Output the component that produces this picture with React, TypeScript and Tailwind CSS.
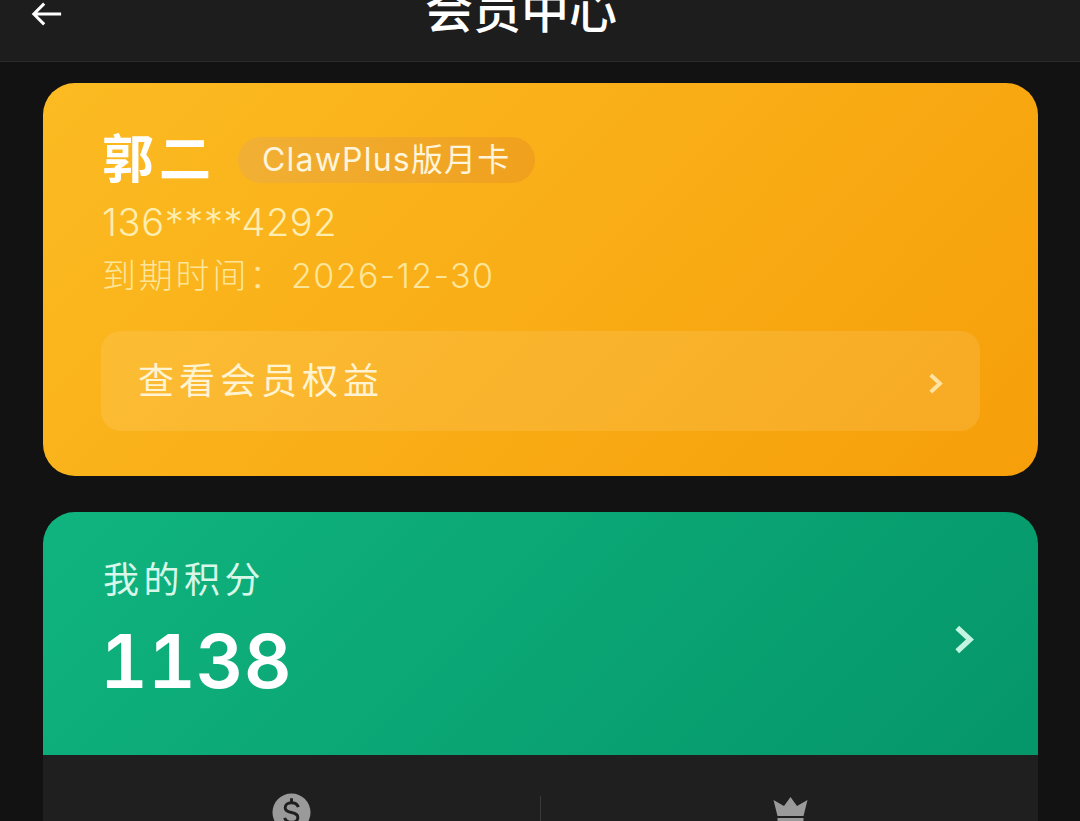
const font = "[font-family:Inter,'Noto_Sans_CJK_SC',sans-serif]"

function Chevron({ className }: { className: string }) {
  return (
    <svg viewBox="0 0 24 32" className={className} fill="none" stroke="currentColor" strokeWidth="6">
      <path d="M4 3 L18 16 L4 29" />
    </svg>
  )
}

export default function App() {
  return (
    <div className={`flex h-[821px] flex-col overflow-hidden bg-[#121212] ${font}`}>
      <header className="relative h-[62px] shrink-0 border-b border-[#2a2a2a] bg-[#1d1d1d]">
        <svg viewBox="0 0 34 28" className="absolute left-[31px] top-0 h-[28px] w-[32px] text-white" fill="none" stroke="currentColor" strokeWidth="3.2">
          <path d="M32 14 H3 M14 3 L3 14 L14 25" />
        </svg>
        <h1 className="absolute inset-x-0 top-[-21px] pr-[38px] text-center text-[48px] leading-[64px] font-medium text-white">
          会员中心
        </h1>
      </header>

      <main className="mt-[21px] mr-[42px] ml-[43px] flex flex-col">
        <section className="h-[393px] rounded-[32px] bg-[linear-gradient(135deg,#fcbb22,#f69f0a)] px-[58px] pt-[50px]">
          <div className="flex h-[54px] items-center">
            <span className="ml-px text-[52px] leading-[54px] font-semibold tracking-[5px] text-white">郭二</span>
            <span className="ml-[22px] flex h-[46px] items-center rounded-full bg-gradient-to-r from-[#f1b034] to-[#f0a01c] px-6 text-[32px] tracking-[1.2px] text-[#fff4dc]">
              ClawPlus版月卡
            </span>
          </div>
          <p className="mt-[13px] ml-[1px] text-[38px] leading-[44px] font-light tracking-[0.6px] text-[#ffeeb0]">136****4292</p>
          <p className="mt-[10px] ml-[1px] text-[34px] leading-[44px] font-light text-[#fde69a]">
            <span className="tracking-[2.8px]">到期时间：</span>
            <span className="ml-[5px] tracking-[1.4px]">2026-12-30</span>
          </p>
          <div className="mt-[33px] flex h-[100px] items-center justify-between rounded-[20px] bg-white/10 pr-[36px] pl-[37px]">
            <span className="text-[36px] tracking-[5px] text-[#fff3d2]">查看会员权益</span>
            <Chevron className="mt-[5px] h-[21px] w-[16px] text-[#ffe3a3]" />
          </div>
        </section>

        <section className="mt-[36px] flex h-[243px] items-start justify-between rounded-t-[32px] bg-[linear-gradient(135deg,#10b47f,#059669)] pr-[62px] pl-[60px] pt-[46px]">
          <div>
            <p className="text-[36px] leading-[44px] tracking-[4.5px] text-[#d8f7e8]">我的积分</p>
            <p className="mt-[13px] -ml-[3px] text-[74px] leading-[92px] font-semibold text-white tabular-nums">1138</p>
          </div>
          <Chevron className="mt-[67px] h-[29px] w-[23px] text-[#c5f5e2]" />
        </section>

        <section className="grid h-[70px] grid-cols-[1fr_1px_1fr] bg-[#1f1f1f]">
          <div className="flex justify-center pt-[38px]">
            <svg viewBox="0 0 40 40" className="h-[39px] w-[39px]">
              <circle cx="20" cy="20" r="19.5" fill="#9a9a9a" />
              <path
                d="M27 14.5 C26 11.5 23.5 10 20 10 C16 10 13.5 12 13.5 15 C13.5 18.5 16.5 19.3 20 20 C23.5 20.7 26.5 21.8 26.5 25 C26.5 28 24 30 20 30 C16.5 30 14 28.5 13 25.5 M20 5.5 V10 M20 30 V34.5"
                fill="none"
                stroke="#1f1f1f"
                strokeWidth="3"
              />
            </svg>
          </div>
          <div className="mt-[41px] bg-[#3a3a3a]" />
          <div className="flex justify-center pt-[42px]">
            <svg viewBox="0 0 35 36" className="mr-[-1px] h-[36px] w-[35px]" fill="#9a9a9a">
              <path d="M17.5 0 L24 9 L34.5 3 L30.5 19 H4.5 L0.5 3 L11 9 Z" />
              <rect x="4.5" y="21" width="26" height="9" />
            </svg>
          </div>
        </section>
      </main>
    </div>
  )
}
